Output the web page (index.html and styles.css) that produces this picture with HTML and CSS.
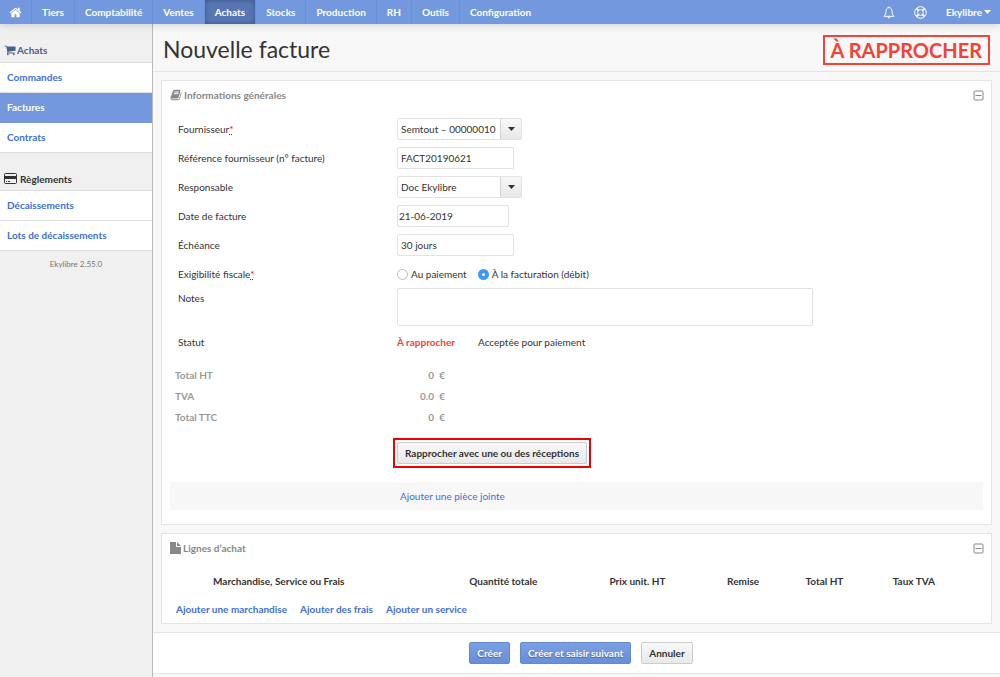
FILE: index.html
```html
<!DOCTYPE html>
<html lang="fr">
<head>
<meta charset="utf-8">
<title>Nouvelle facture</title>
<meta name="viewport" content="width=device-width, initial-scale=1">
<link rel="stylesheet" href="styles.css">
</head>
<body>
<header class="topbar">
  <nav class="menu">
    <a href="#" class="home" aria-label="Accueil"><svg width="13" height="13" viewBox="0 0 1792 1792"><path d="M1472 992v480q0 26-19 45t-45 19h-384v-384h-256v384h-384q-26 0-45-19t-19-45v-480q0-1 .5-3t.5-3l575-474 575 474q1 2 1 6zm223-69l-62 74q-8 9-21 11h-3q-13 0-21-7l-692-577-692 577q-12 8-24 7-13-2-21-11l-62-74q-8-10-7-23.5t11-21.5l719-599q32-26 76-26t76 26l244 204v-195q0-14 9-23t23-9h192q14 0 23 9t9 23v408l219 182q10 8 11 21.5t-7 23.5z"/></svg></a>
    <a href="#">Tiers</a>
    <a href="#">Comptabilité</a>
    <a href="#">Ventes</a>
    <a href="#" class="active">Achats</a>
    <a href="#">Stocks</a>
    <a href="#">Production</a>
    <a href="#">RH</a>
    <a href="#">Outils</a>
    <a href="#">Configuration</a>
  </nav>
  <div class="tools">
    <a href="#" aria-label="Notifications"><svg width="12" height="13" viewBox="0 0 12 13"><path class="line" d="M6 1.6C3.8 1.6 3 3.4 3 5.2 3 7.600 2.300 8.900 1 10.300H11C9.700 8.900 9 7.600 9 5.200 9 3.400 8.200 1.600 6 1.600ZM6 .5V1.600M4.900 10.600Q5 12 6 12T7.100 10.600"/></svg></a>
    <a href="#" aria-label="Aide"><svg width="13" height="13" viewBox="0 0 13 13"><circle class="line" cx="6.500" cy="6.500" r="5.800"/><circle class="line" cx="6.500" cy="6.500" r="2.800"/><path class="buoy" d="M2.400 2.400L4.600 4.600M10.600 2.400L8.400 4.600M2.400 10.600L4.600 8.400M10.600 10.600L8.400 8.400"/></svg></a>
    <a href="#">Ekylibre<svg class="caret" width="7" height="4" viewBox="0 0 7 4"><path d="M0 0H7L3.500 4Z"/></svg></a>
  </div>
</header>
<div class="layout">
  <aside class="sidebar">
    <h2 class="current"><svg width="12" height="12" viewBox="0 0 1792 1792"><path d="M704 1536q0 52-38 90t-90 38-90-38-38-90 38-90 90-38 90 38 38 90zm896 0q0 52-38 90t-90 38-90-38-38-90 38-90 90-38 90 38 38 90zm128-1088v512q0 24-16.500 42.500t-40.500 21.500l-1044 122q13 60 13 70 0 16-24 64h920q26 0 45 19t19 45-19 45-45 19h-1024q-26 0-45-19t-19-45q0-11 8-31.500t16-36 21.500-40 15.500-29.500l-177-823h-204q-26 0-45-19t-19-45 19-45 45-19h256q16 0 28.500 6.500t19.500 15.500 13 24.500 8 26 5.500 29.500 4.500 26h1201q26 0 45 19t19 45z"/></svg>Achats</h2>
    <ul>
      <li><a href="#">Commandes</a></li>
      <li><a href="#" class="active">Factures</a></li>
      <li><a href="#">Contrats</a></li>
    </ul>
    <h2><svg width="13" height="11" viewBox="0 0 13 11"><rect class="card-edge" x=".5" y=".5" width="12" height="10" rx="1"/><path d="M1 3H12V6H1ZM2 8H3V9H2ZM4 8H6V9H4Z"/></svg>Règlements</h2>
    <ul>
      <li><a href="#">Décaissements</a></li>
      <li><a href="#">Lots de décaissements</a></li>
    </ul>
    <p class="version">Ekylibre 2.55.0</p>
  </aside>
  <main>
    <div class="heading">
      <h1>Nouvelle facture</h1>
      <span class="stamp">À RAPPROCHER</span>
    </div>
    <form>
      <section class="panel general">
        <div class="panel-head">
          <h3><svg width="12" height="12" viewBox="0 0 1792 1792"><path d="M1703 478q40 57 18 129l-275 906q-19 64-76.500 107.500t-122.500 43.500h-923q-77 0-148.500-53.500t-99.500-131.500q-24-67-2-127 0-4 3-27t4-37q1-8-3-21.500t-3-19.500q2-11 8-21t16.500-23.500 16.500-23.500q23-38 45-91.500t30-91.500q3-10 .5-30t-.5-28q3-11 17-28t17-23q21-36 42-92t25-90q1-9-2.500-32t.5-28q4-13 22-30.500t22-22.500q19-26 42.500-84.500t27.500-96.500q1-8-3-25.500t-2-26.500q2-8 9-18t18-23 17-21q8-12 16.500-30.500t15-35 16-36 19.500-32 26.500-23.500 36-11.500 47.500 5.500l-1 3q38-9 51-9h761q74 0 114 56t18 130l-274 906q-36 119-71.500 153.500t-128.500 34.500h-869q-27 0-38 15-11 16-1 43 24 70 144 70h923q29 0 56-15.500t35-41.500l300-987q7-22 5-57 38 15 59 43zm-1064 2q-4 13 2 22.500t20 9.500h608q13 0 25.500-9.500t16.500-22.500l21-64q4-13-2-22.500t-20-9.500h-608q-13 0-25.500 9.500t-16.500 22.500zm-83 256q-4 13 2 22.500t20 9.500h608q13 0 25.500-9.500t16.500-22.500l21-64q4-13-2-22.500t-20-9.500h-608q-13 0-25.500 9.500t-16.500 22.500z"/></svg>Informations générales</h3>
          <button type="button" class="fold" aria-label="Replier"><svg width="11" height="11" viewBox="0 0 11 11"><rect x="1" y="1" width="9" height="9" rx="1"/><path d="M2.500 5.500H8.500"/></svg></button>
        </div>
        <div class="fields">
          <div class="row">
            <label for="supplier">Fournisseur<abbr title="Obligatoire">*</abbr></label>
            <span class="combo"><select id="supplier"><option>Semtout – 00000010</option></select><svg width="7" height="4" viewBox="0 0 7 4"><path d="M0 0H7L3.500 4Z"/></svg></span>
          </div>
          <div class="row">
            <label for="reference">Référence fournisseur (n° facture)</label>
            <input type="text" id="reference" value="FACT20190621">
          </div>
          <div class="row">
            <label for="responsible">Responsable</label>
            <span class="combo"><select id="responsible"><option>Doc Ekylibre</option></select><svg width="7" height="4" viewBox="0 0 7 4"><path d="M0 0H7L3.500 4Z"/></svg></span>
          </div>
          <div class="row">
            <label for="date">Date de facture</label>
            <input type="text" id="date" class="date" value="21-06-2019">
          </div>
          <div class="row">
            <label for="delay">Échéance</label>
            <input type="text" id="delay" value="30 jours">
          </div>
          <div class="row" role="radiogroup" aria-labelledby="tax">
            <span id="tax">Exigibilité fiscale<abbr title="Obligatoire">*</abbr></span>
            <span class="choices">
              <label><input type="radio" name="tax">Au paiement</label>
              <label><input type="radio" name="tax" checked>À la facturation (débit)</label>
            </span>
          </div>
          <div class="row notes">
            <label for="notes">Notes</label>
            <textarea id="notes"></textarea>
          </div>
          <div class="row" role="radiogroup" aria-labelledby="state">
            <span id="state">Statut</span>
            <span class="states">
              <label><input type="radio" name="state" checked><span>À rapprocher</span></label>
              <label><input type="radio" name="state"><span>Acceptée pour paiement</span></label>
            </span>
          </div>
        </div>
        <dl class="totals">
          <div><dt>Total HT</dt><dd><span>0</span><span>€</span></dd></div>
          <div><dt>TVA</dt><dd><span>0.0</span><span>€</span></dd></div>
          <div><dt>Total TTC</dt><dd><span>0</span><span>€</span></dd></div>
        </dl>
        <div class="highlight"><button type="button" class="btn">Rapprocher avec une ou des réceptions</button></div>
        <div class="attachments"><a href="#">Ajouter une pièce jointe</a></div>
      </section>
      <section class="panel">
        <div class="panel-head">
          <h3><svg width="11" height="12" viewBox="0 0 11 12"><path d="M0 0H6V5H11V12H0ZM7 0L11 4H7Z"/></svg>Lignes d’achat</h3>
          <button type="button" class="fold" aria-label="Replier"><svg width="11" height="11" viewBox="0 0 11 11"><rect x="1" y="1" width="9" height="9" rx="1"/><path d="M2.500 5.500H8.500"/></svg></button>
        </div>
        <table class="lines">
          <thead>
            <tr><th class="item">Marchandise, Service ou Frais</th><th class="quantity">Quantité totale</th><th class="price">Prix unit. HT</th><th class="discount">Remise</th><th class="total">Total HT</th><th class="rate">Taux TVA</th><td></td></tr>
          </thead>
        </table>
        <div class="add-links">
          <a href="#">Ajouter une marchandise</a>
          <a href="#">Ajouter des frais</a>
          <a href="#">Ajouter un service</a>
        </div>
      </section>
      <div class="actions">
        <button type="submit" class="btn primary">Créer</button>
        <button type="submit" class="btn primary">Créer et saisir suivant</button>
        <button type="button" class="btn">Annuler</button>
      </div>
    </form>
  </main>
</div>
</body>
</html>
```
FILE: styles.css
```css
* { box-sizing: border-box; }

body {
  margin: 0;
  min-height: 100vh;
  display: flex;
  flex-direction: column;
  font: 10px/16px Lato, sans-serif;
  color: #333;
  background: #f8f8f8;
}

a { color: #3f6fd3; text-decoration: none; }
h1, h2, h3, ul, p, dl, dd { margin: 0; padding: 0; }
ul { list-style: none; }
svg { flex: none; fill: currentColor; }
button, input, select, textarea { margin: 0; font: inherit; color: inherit; }

/* Top bar */
.topbar {
  position: relative;
  display: flex;
  justify-content: space-between;
  height: 24px;
  background: #7398de;
  box-shadow: 0 1px 8px rgba(0, 0, 0, 0.16);
  font-weight: bold;
}
.topbar a { display: flex; align-items: center; color: #fff; }
.menu { display: flex; }
.menu a { padding: 0 10px; border-right: 1px solid #6b8fd2; }
.menu a:last-child { border-right: 0; }
.menu .home { padding: 0 9px; }
.menu .active { background: #5776b2; box-shadow: inset 0 0 5px rgba(30, 50, 100, 0.5); }
.tools { display: flex; gap: 19px; padding-right: 9px; }
.line { fill: none; stroke: #fff; stroke-width: 1; }
.buoy { fill: none; stroke: #fff; stroke-width: 2; }
.caret { margin-left: 2px; }

/* Side menu */
.layout { flex: 1; display: flex; }
.sidebar { flex: none; width: 153px; background: #f0f0f0; border-right: 1px solid #bbb; }
.sidebar h2 {
  display: flex;
  align-items: center;
  gap: 3px;
  height: 38px;
  padding: 14px 4px 0;
  border-bottom: 1px solid #ddd;
  font-size: 10px;
}
.sidebar h2.current { height: 39px; color: #4a5f8d; gap: 1px; }
.sidebar li { border-bottom: 1px solid #ddd; background: #fff; }
.sidebar li a { display: block; padding: 6px 7px 7px; font-weight: bold; }
.sidebar li .active { margin-bottom: -1px; padding-bottom: 8px; background: #7398de; color: #fff; }
.card-edge { fill: none; stroke: currentColor; }
.version { padding-top: 5px; text-align: center; font-size: 8px; color: #777; }

/* Page heading */
main { flex: 1; min-width: 0; }
.heading {
  display: flex;
  align-items: center;
  justify-content: space-between;
  height: 48px;
  padding: 5px 10px 0 10px;
  border-bottom: 1px solid #e4e4e4;
}
h1 { padding-bottom: 3px; font-size: 23px; line-height: 32px; font-weight: normal; }
.stamp {
  padding: 0 6px;
  border: 2px solid #f44336;
  color: #f44336;
  font-size: 20px;
  line-height: 26px;
  font-weight: bold;
}

/* Panels */
.panel { margin: 8px 8px 0; padding: 6px 8px; border: 1px solid #e4e4e4; background: #fff; }
.panel.general { padding-bottom: 14px; }
.panel-head { display: flex; align-items: center; justify-content: space-between; }
.panel h3 { display: flex; align-items: center; gap: 2px; font-size: 10px; color: #888; }
.fold { display: flex; padding: 0; border: 0; background: none; }
.fold svg { margin: 0 -1px 0 0; fill: none; stroke: #888; }

/* Form rows */
.fields { display: grid; gap: 7px; padding: 15px 8px 0; }
.row { display: grid; grid-template-columns: 219px 1fr; align-items: center; justify-items: start; min-height: 22px; }
.row abbr { color: #e00; text-decoration: underline dotted; }
.row input[type=text], .row textarea, .row select {
  width: 117px;
  height: 22px;
  padding: 0 3px;
  border: 1px solid #e2e2e2;
  border-radius: 2px;
  background: #fff;
}
.row input.date { width: 112px; padding: 0 1px; }
.combo { position: relative; display: flex; }
.row .combo select {
  appearance: none;
  width: 125px;
  padding-right: 22px;
  background:
    linear-gradient(#f8f8f8, #e8e8e8) right / 20px 100% no-repeat,
    linear-gradient(#d4d4d4, #d4d4d4) right / 21px 100% no-repeat #fff;
}
.combo svg { position: absolute; right: 7px; top: 9px; pointer-events: none; }
.choices { display: flex; gap: 11px; }
.choices label { display: flex; align-items: center; gap: 3px; }
.choices input {
  appearance: none;
  width: 11px;
  height: 11px;
  border: 1px solid #bbb;
  border-radius: 50%;
  background: #fff;
}
.choices input:checked { border: 4px solid #3b99fc; }
.row.notes { align-items: start; margin-top: -4px; }
.row.notes label { padding-top: 2px; }
.row textarea { display: block; width: 100%; max-width: 416px; height: 38px; resize: none; }
.states { display: flex; gap: 23px; }
.states input { position: absolute; appearance: none; }
.states input:checked + span { color: #f44336; font-weight: bold; }
.row.notes + .row { margin-top: -2px; }

/* Totals */
.totals { padding: 12px 5px 0; font-weight: bold; color: #999; }
.totals div { display: grid; grid-template-columns: 204px 66px; line-height: 21px; }
.totals dd { display: grid; grid-template-columns: 55px 11px; text-align: right; }

.highlight { width: fit-content; margin: 10px 0 14px 223px; padding: 2px; border: 2px solid #f00000; }
.btn {
  height: 22px;
  padding: 0 7px;
  border: 1px solid #ccc;
  border-radius: 2px;
  background: linear-gradient(#f8f8f8, #e9e9e9);
  font-weight: bold;
}
.highlight .btn { display: block; }
.attachments { padding: 6px 230px; border-radius: 2px; background: #f7f7f7; }

/* Purchase lines */
.lines { width: 100%; margin-top: 15px; border-collapse: collapse; table-layout: fixed; }
.lines th { padding: 2px 0; }
.lines td { padding: 0; }
.lines .item { width: 33%; padding-left: 43px; text-align: left; }
.lines .quantity { width: 16%; }
.lines .price { width: 17%; }
.lines .discount { width: 9%; }
.lines .total { width: 11%; }
.lines .rate { width: 11%; }
.add-links { display: flex; gap: 13px; padding: 10px 6px 0; }
.add-links a { font-weight: bold; }

.actions {
  display: flex;
  justify-content: center;
  gap: 10px;
  margin-top: 8px;
  padding: 9px 9px 9px 18px;
  border: solid #e4e4e4;
  border-width: 1px 0;
  background: #fff;
}
.btn.primary {
  border-color: #6488cc;
  background: linear-gradient(#7a9fe3, #678ed8);
  color: #fff;
  text-shadow: 0 1px 1px rgba(0, 0, 0, 0.35);
}
```
